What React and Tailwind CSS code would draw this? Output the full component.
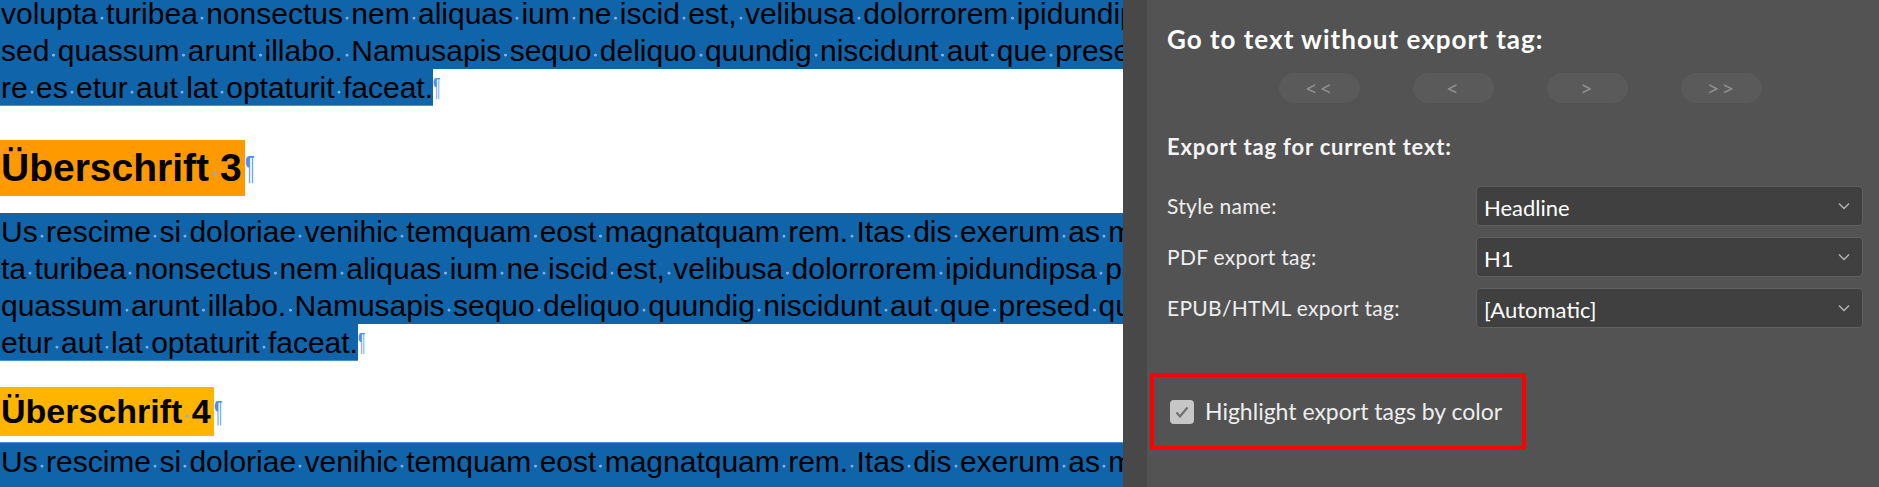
import React from 'react';

const para1 = [
  'volupta turibea nonsectus nem aliquas ium ne iscid est, velibusa dolorrorem ipidundipsa pa',
  'sed quassum arunt illabo. Namusapis sequo deliquo quundig niscidunt aut que presed qui',
  're es etur aut lat optaturit faceat.',
];

const para2 = [
  'Us rescime si doloriae venihic temquam eost magnatquam rem. Itas dis exerum as mi',
  'ta turibea nonsectus nem aliquas ium ne iscid est, velibusa dolorrorem ipidundipsa pa',
  'quassum arunt illabo. Namusapis sequo deliquo quundig niscidunt aut que presed qu',
  'etur aut lat optaturit faceat.',
];

const para3 = [
  'Us rescime si doloriae venihic temquam eost magnatquam rem. Itas dis exerum as m',
  'ta turibea nonsectus nem aliquas ium ne iscid est, velibusa dolorrorem ipidundipsa pa',
];

// spaces show InDesign's hidden-character dot
function Dotted({ text }) {
  const words = text.split(' ');
  return words.map((w, i) => (
    <React.Fragment key={i}>
      {i > 0 && (
        <span className="bg-[radial-gradient(circle_at_50%_64%,#7db0ee_0_1.1px,transparent_1.8px)]"> </span>
      )}
      {w}
    </React.Fragment>
  ));
}

function Pilcrow() {
  return (
    <span className="inline-block w-[12px] origin-left scale-x-[0.55] text-[0.85em] font-normal text-[#4d90f5]">
      ¶
    </span>
  );
}

function Para({ lines, showEnd = true }) {
  return (
    <div>
      {lines.map((line, i) => {
        const last = i === lines.length - 1;
        return (
          <div key={i} className="flex h-[37px] leading-[37px]">
            <span
              className={
                'shrink-0 whitespace-nowrap bg-[#1064a9] pl-[1px] ' +
                (last && showEnd ? 'border-b border-[#4a8fd2]' : '')
              }
            >
              <Dotted text={line} />
            </span>
            {last && showEnd && <Pilcrow />}
          </div>
        );
      })}
    </div>
  );
}

function Heading({ text, bg, size }) {
  return (
    <div className={'flex items-center font-bold ' + size}>
      <span className={'whitespace-nowrap pl-[1px] pr-[3px] ' + bg}>
        <Dotted text={text} />
      </span>
      <Pilcrow />
    </div>
  );
}

function Chevron() {
  return (
    <svg width="12" height="8" viewBox="0 0 12 8" fill="none">
      <path d="M1 1.5l5 5 5-5" stroke="#b5b5b5" strokeWidth="1.4" />
    </svg>
  );
}

const rows = [
  ['Style name:', 'Headline'],
  ['PDF export tag:', 'H1'],
  ['EPUB/HTML export tag:', '[Automatic]'],
];

export default function App() {
  return (
    <div className="flex h-[487px] w-[1879px] overflow-hidden">
      <div className="w-[1123px] shrink-0 overflow-hidden bg-white font-['Liberation_Sans',Arial,sans-serif] text-[30px] text-black">
        <div className="-mt-[5px]">
          <Para lines={para1} />
        </div>
        <div className="mt-[34px]">
          <Heading text="Überschrift 3" bg="bg-[#ff9900] h-[56px] leading-[56px]" size="text-[39px]" />
        </div>
        <div className="mt-[17px]">
          <Para lines={para2} />
        </div>
        <div className="mt-[26px]">
          <Heading text="Überschrift 4" bg="bg-[#ffb400] h-[49px] leading-[49px]" size="text-[34px]" />
        </div>
        <div className="mt-[6px] border-t border-[#4a8fd2]">
          <Para lines={para3} showEnd={false} />
        </div>
      </div>

      <div className="flex flex-1 bg-[#535353] font-['Lato',sans-serif]">
        <div className="w-[24px] bg-[#484848]" />
        <div className="flex flex-1 flex-col pl-[20px] pr-[16px]">
          <div className="mt-[25px] text-[26px] font-bold leading-[28px] tracking-[1px] text-white">
            Go to text without export tag:
          </div>
          <div className="ml-[112px] mt-[20px] flex gap-[53px]">
            {['<<', '<', '>', '>>'].map((l) => (
              <button
                key={l}
                className="h-[30px] w-[81px] rounded-full bg-[#5a5a5a] text-[22px] leading-none tracking-[2px] text-[#8e8e8e]"
              >
                {l}
              </button>
            ))}
          </div>
          <div className="mt-[30px] text-[22px] font-bold leading-[28px] tracking-[0.8px] text-[#f4f4f4]">
            Export tag for current text:
          </div>
          <div className="mt-[25px] flex flex-col gap-[11px]">
            {rows.map(([label, value]) => (
              <div key={label} className="flex h-[40px] items-center">
                <span className="w-[309px] text-[21px] tracking-[0.3px] text-[#eeeeee]">{label}</span>
                <div className="flex h-full flex-1 items-center justify-between rounded-[4px] border border-[#606060] bg-[#404040] pl-[7px] pr-[12px]">
                  <span className="pt-[2px] text-[22px] text-white">{value}</span>
                  <Chevron />
                </div>
              </div>
            ))}
          </div>
          <div className="-ml-[17px] mt-[45px] flex h-[77px] w-[376px] items-center gap-[11px] border-4 border-[#ff0000] pl-[16px]">
            <div className="flex h-[24px] w-[24px] items-center justify-center rounded-[4px] bg-[#c6c6c6]">
              <svg width="14" height="12" viewBox="0 0 14 12" fill="none">
                <path d="M1.5 6.5l3.5 4 7.5-9" stroke="#6c6c6c" strokeWidth="2" />
              </svg>
            </div>
            <span className="text-[23px] text-[#eeeeee]">Highlight export tags by color</span>
          </div>
        </div>
      </div>
    </div>
  );
}
